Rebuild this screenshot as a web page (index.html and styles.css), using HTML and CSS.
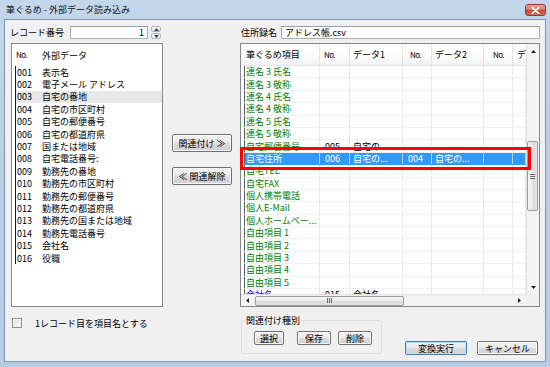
FILE: index.html
```html
<!DOCTYPE html>
<html lang="ja">
<head>
<meta charset="utf-8">
<title>筆ぐるめ - 外部データ読み込み</title>
<link rel="stylesheet" href="styles.css">
</head>
<body>
<div class="window">
  <div class="titlebar">
    <span class="title">筆ぐるめ - 外部データ読み込み</span>
    <span class="close"><svg width="9" height="7" viewBox="0 0 9 7"><path d="M1.5 0.8 L7.5 6.2 M7.5 0.8 L1.5 6.2" stroke="#fff" stroke-width="1.7" stroke-linecap="round"/></svg></span>
  </div>
  <div class="client">
    <div class="rec-row">
      <span class="lbl rec-lbl">レコード番号</span>
      <span class="textbox num">1</span>
      <span class="spin">
        <span class="sp"><svg width="5" height="3" viewBox="0 0 5 3"><polygon points="0,3 2.5,0 5,3" fill="#3b4a5c"/></svg></span>
        <span class="sp"><svg width="5" height="3" viewBox="0 0 5 3"><polygon points="0,0 5,0 2.5,3" fill="#3b4a5c"/></svg></span>
      </span>
    </div>
    <div class="file-row">
      <span class="lbl file-lbl">住所録名</span>
      <span class="textbox file">アドレス帳.csv</span>
    </div>

    <div class="extlist">
      <div class="lhead"><span class="lno nolabel">No.</span><span>外部データ</span></div>
      <div class="lrow"><span class="lno">001</span><span>表示名</span></div>
      <div class="lrow"><span class="lno">002</span><span>電子メール アドレス</span></div>
      <div class="lrow hover"><span class="lno">003</span><span>自宅の番地</span></div>
      <div class="lrow"><span class="lno">004</span><span>自宅の市区町村</span></div>
      <div class="lrow"><span class="lno">005</span><span>自宅の郵便番号</span></div>
      <div class="lrow"><span class="lno">006</span><span>自宅の都道府県</span></div>
      <div class="lrow"><span class="lno">007</span><span>国または地域</span></div>
      <div class="lrow"><span class="lno">008</span><span>自宅電話番号:</span></div>
      <div class="lrow"><span class="lno">009</span><span>勤務先の番地</span></div>
      <div class="lrow"><span class="lno">010</span><span>勤務先の市区町村</span></div>
      <div class="lrow"><span class="lno">011</span><span>勤務先の郵便番号</span></div>
      <div class="lrow"><span class="lno">012</span><span>勤務先の都道府県</span></div>
      <div class="lrow"><span class="lno">013</span><span>勤務先の国または地域</span></div>
      <div class="lrow"><span class="lno">014</span><span>勤務先電話番号</span></div>
      <div class="lrow"><span class="lno">015</span><span>会社名</span></div>
      <div class="lrow"><span class="lno">016</span><span>役職</span></div>
    </div>

    <div class="midbtns">
      <button class="btn">関連付け ≫</button>
      <button class="btn">≪ 関連解除</button>
    </div>

    <div class="gridbox">
      <div class="gdata">
        <div class="ghead">
          <span class="h1">筆ぐるめ項目</span>
          <span class="h2 nolabel">No.</span>
          <span class="h3">データ1</span>
          <span class="h4 nolabel">No.</span>
          <span class="h5">データ2</span>
          <span class="h6 nolabel">No.</span>
          <span class="h7">デ</span>
        </div>
        <div class="grow g"><span>連名 3 氏名</span><span></span><span></span><span></span><span></span><span></span><span></span></div>
        <div class="grow g"><span>連名 3 敬称</span><span></span><span></span><span></span><span></span><span></span><span></span></div>
        <div class="grow g"><span>連名 4 氏名</span><span></span><span></span><span></span><span></span><span></span><span></span></div>
        <div class="grow g"><span>連名 4 敬称</span><span></span><span></span><span></span><span></span><span></span><span></span></div>
        <div class="grow g"><span>連名 5 氏名</span><span></span><span></span><span></span><span></span><span></span><span></span></div>
        <div class="grow g"><span>連名 5 敬称</span><span></span><span></span><span></span><span></span><span></span><span></span></div>
        <div class="grow g"><span>自宅郵便番号</span><span>005</span><span>自宅の...</span><span></span><span></span><span></span><span></span></div>
        <div class="grow sel"><span>自宅住所</span><span>006</span><span>自宅の...</span><span>004</span><span>自宅の...</span><span></span><span></span></div>
        <div class="grow g"><span>自宅TEL</span><span></span><span></span><span></span><span></span><span></span><span></span></div>
        <div class="grow g"><span>自宅FAX</span><span></span><span></span><span></span><span></span><span></span><span></span></div>
        <div class="grow g"><span>個人携帯電話</span><span></span><span></span><span></span><span></span><span></span><span></span></div>
        <div class="grow g"><span>個人E-Mail</span><span></span><span></span><span></span><span></span><span></span><span></span></div>
        <div class="grow g"><span>個人ホームペー...</span><span></span><span></span><span></span><span></span><span></span><span></span></div>
        <div class="grow g"><span>自由項目 1</span><span></span><span></span><span></span><span></span><span></span><span></span></div>
        <div class="grow g"><span>自由項目 2</span><span></span><span></span><span></span><span></span><span></span><span></span></div>
        <div class="grow g"><span>自由項目 3</span><span></span><span></span><span></span><span></span><span></span><span></span></div>
        <div class="grow g"><span>自由項目 4</span><span></span><span></span><span></span><span></span><span></span><span></span></div>
        <div class="grow g"><span>自由項目 5</span><span></span><span></span><span></span><span></span><span></span><span></span></div>
        <div class="grow b"><span>会社名</span><span>015</span><span>会社名</span><span></span><span></span><span></span><span></span></div>
      </div>
      <div class="vscroll">
        <span class="varrow"><svg width="5" height="3" viewBox="0 0 5 3"><polygon points="0,3 2.5,0 5,3" fill="#222"/></svg></span>
        <div class="vtrack">
          <div class="vthumb"><svg width="5" height="5" viewBox="0 0 5 5"><path d="M0 0.5 H5 M0 2.5 H5 M0 4.5 H5" stroke="#6a6a6a" stroke-width="1"/></svg></div>
        </div>
        <span class="varrow"><svg width="5" height="3" viewBox="0 0 5 3"><polygon points="0,0 5,0 2.5,3" fill="#222"/></svg></span>
      </div>
      <div class="hscroll">
        <span class="harrow"><svg width="3" height="5" viewBox="0 0 3 5"><polygon points="3,0 3,5 0,2.5" fill="#222"/></svg></span>
        <div class="hthumb"><svg width="5" height="5" viewBox="0 0 5 5"><path d="M0.5 0 V5 M2.5 0 V5 M4.5 0 V5" stroke="#6a6a6a" stroke-width="1"/></svg></div>
        <span class="hspace"></span>
        <span class="harrow right"><svg width="3" height="5" viewBox="0 0 3 5"><polygon points="0,0 0,5 3,2.5" fill="#222"/></svg></span>
      </div>
      <div class="corner"></div>
      <div class="redbox"></div>
    </div>

    <div class="chkrow">
      <span class="checkbox"></span>
      <span class="chklbl">1レコード目を項目名とする</span>
    </div>

    <div class="actions">
      <fieldset class="group">
        <legend>関連付け種別</legend>
        <div class="gbtns">
          <button class="btn sm b1">選択</button>
          <button class="btn sm b2">保存</button>
          <button class="btn sm b3">削除</button>
        </div>
      </fieldset>
      <button class="btn big default">変換実行</button>
      <button class="btn big cancel">キャンセル</button>
    </div>
  </div>
</div>
</body>
</html>
```

FILE: styles.css
```css
* { box-sizing: border-box; }
html, body { margin: 0; padding: 0; }
body {
  width: 550px;
  height: 367px;
  overflow: hidden;
  font-family: "Noto Sans CJK JP", "Noto Sans", sans-serif;
  font-size: 9px;
  line-height: 1;
  color: #000;
}
.window {
  width: 550px;
  height: 367px;
  display: flex;
  flex-direction: column;
  background: linear-gradient(180deg, #c3d6ec 0%, #bcd1e8 30%, #b6cce5 100%);
}
.titlebar {
  height: 19px;
  display: flex;
  align-items: center;
  padding: 0 4px 0 6px;
}
.title { flex: 1; color: #111; font-size: 9px; }
.close {
  width: 21px;
  height: 12px;
  margin-top: 1px;
  border: 1px solid #8c3b30;
  border-radius: 3px;
  background: linear-gradient(180deg, #e9a99c 0%, #d9786a 45%, #c54a36 55%, #d2705e 100%);
  display: flex;
  align-items: center;
  justify-content: center;
}
.client {
  flex: 1;
  margin: 0 4px 5px 4px;
  border: 1px solid #7f93ad;
  background: #f0f0f0;
  display: grid;
  grid-template-columns: 152px 9px 60px 8px 300px;
  grid-template-rows: 13px 4px 264px 1fr;
  padding: 6px 5px 0 6px;
}
.lbl { line-height: 13px; white-space: nowrap; }
.rec-row { grid-column: 1 / 4; grid-row: 1; display: flex; align-items: center; }
.rec-lbl { width: 60px; margin-left: -1px; }
.textbox {
  height: 13px;
  background: #fff;
  border: 1px solid #abadb3;
  border-top-color: #9a9ea8;
  display: flex;
  align-items: center;
  white-space: nowrap;
}
.num { width: 78px; justify-content: flex-end; padding-right: 3px; }
.spin { width: 10px; height: 13px; margin-left: 3px; display: flex; flex-direction: column; gap: 1px; }
.sp {
  flex: 1;
  border: 1px solid #a9b6c6;
  border-radius: 2px;
  background: linear-gradient(180deg, #f5f8fb, #dde5ee);
  display: flex;
  align-items: center;
  justify-content: center;
}
.file-row { grid-column: 5; grid-row: 1; display: flex; align-items: center; }
.file-lbl { width: 40px; margin-left: 1px; }
.file { flex: 1; padding-left: 3px; }

/* left list */
.extlist {
  grid-column: 1;
  grid-row: 3;
  background: #fff;
  border: 1px solid #828790;
  overflow: hidden;
}
.lhead { height: 22px; display: flex; align-items: center; padding-left: 4px; }
.lhead .lno { width: 26px; }
.nolabel { font-size: 8px; letter-spacing: -0.6px; }
.lrow {
  height: 12.4px;
  margin-left: 3px;
  border-left: 1px solid #1a1a1a;
  display: flex;
  align-items: center;
  padding-left: 1px;
  white-space: nowrap;
}
.lrow .lno { width: 25px; }
.lrow.hover { background: #e8e8e8; }

/* middle */
.midbtns {
  grid-column: 3;
  grid-row: 3;
  display: flex;
  flex-direction: column;
  padding-top: 91px;
  gap: 15px;
}
.btn {
  font-family: inherit;
  font-size: 9px;
  line-height: 1;
  color: #000;
  height: 18px;
  padding: 0;
  border: 1px solid #707070;
  border-radius: 2px;
  background: linear-gradient(180deg, #f2f2f2 0%, #ebebeb 45%, #dddddd 50%, #cfcfcf 100%);
  box-shadow: inset 0 0 0 1px #fafafa;
  display: flex;
  align-items: center;
  justify-content: center;
  white-space: nowrap;
}

/* right grid */
.gridbox {
  grid-column: 5;
  grid-row: 3;
  position: relative;
  background: #fff;
  border: 1px solid #828790;
  display: grid;
  grid-template-columns: 285px 13px;
  grid-template-rows: 250px 12px;
}
.gdata { overflow: hidden; }
.ghead {
  height: 22px;
  display: grid;
  grid-template-columns: 79px 30px 53px 29px 52px 29px 13px;
  border-bottom: 1px solid #e6e6e6;
  background: linear-gradient(180deg, #ffffff 0%, #fbfbfb 60%, #f3f3f3 100%);
}
.ghead span {
  display: flex;
  align-items: center;
  border-right: 1px dotted #cfcfcf;
  white-space: nowrap;
  overflow: hidden;
}
.ghead .h1 { padding-left: 5px; }
.ghead .h2 { padding-left: 4px; }
.ghead .h3 { padding-left: 3px; }
.ghead .h4 { padding-left: 7px; }
.ghead .h5 { padding-left: 3px; }
.ghead .h6 { padding-left: 9px; }
.ghead .h7 { padding-left: 4px; border-right: 0; }
.grow {
  height: 12.4px;
  margin-left: 3px;
  display: grid;
  grid-template-columns: 76px 30px 53px 29px 52px 29px 13px;
  border-bottom: 1px dotted #e2e2e2;
}
.grow span {
  display: flex;
  align-items: center;
  border-right: 1px dotted #d8d8d8;
  white-space: nowrap;
  overflow: hidden;
  padding-left: 3px;
}
.grow span:first-child { border-left: 1px solid #5a5a5a; padding-left: 1px; }
.grow span:nth-child(2), .grow span:nth-child(4), .grow span:nth-child(6) { padding-left: 5px; }
.grow.g span:first-child { color: #008000; }
.grow.b span:first-child { color: #0000ff; }
.grow.sel { background: #3399ff; border-bottom-color: #3399ff; }
.grow.sel span { color: #fff; border-right: 1px solid #a9d2fb; }

.vscroll {
  grid-column: 2;
  grid-row: 1;
  display: flex;
  flex-direction: column;
  background: #f3f3f3;
  border-left: 1px solid #e2e2e2;
}
.varrow { height: 14px; display: flex; align-items: center; justify-content: center; }
.vtrack { flex: 1; }
.vthumb {
  margin: 83px 1px 0 0;
  height: 70px;
  border: 1px solid #9c9c9c;
  border-radius: 2px;
  background: linear-gradient(90deg, #f6f6f6 0%, #e9e9e9 50%, #dadada 51%, #e4e4e4 100%);
  display: flex;
  align-items: center;
  justify-content: center;
}
.hscroll {
  grid-column: 1;
  grid-row: 2;
  display: flex;
  align-items: center;
  background: #f3f3f3;
  border-top: 1px solid #e2e2e2;
}
.harrow { width: 12px; height: 11px; display: flex; align-items: center; justify-content: center; }
.harrow.right { width: 14px; }
.hthumb {
  margin-left: 2px;
  width: 149px;
  height: 10px;
  border: 1px solid #9c9c9c;
  border-radius: 2px;
  background: linear-gradient(180deg, #f6f6f6 0%, #e9e9e9 50%, #dadada 51%, #e4e4e4 100%);
  display: flex;
  align-items: center;
  justify-content: center;
}
.hspace { flex: 1; }
.corner { grid-column: 2; grid-row: 2; background: #f0f0f0; }
.redbox {
  position: absolute;
  left: -1px;
  top: 103px;
  width: 291px;
  height: 23px;
  border: 3px solid #ff0000;
}

/* bottom */
.chkrow {
  grid-column: 1 / 4;
  grid-row: 4;
  align-self: start;
  display: flex;
  align-items: center;
  margin-top: 11px;
  height: 10px;
}
.checkbox {
  width: 10px;
  height: 10px;
  margin-left: 1px;
  border: 1px solid #8f8f8f;
  background: linear-gradient(135deg, #dcdcdc 0%, #f0f0f0 60%, #fbfbfb 100%);
  box-shadow: inset 0 0 0 1px #f4f4f4;
}
.chklbl { margin-left: 13px; white-space: nowrap; }
.actions {
  grid-column: 5;
  grid-row: 4;
  display: flex;
  align-items: flex-start;
}
.group {
  margin: 8px 0 0 1px;
  padding: 0;
  width: 141px;
  height: 39px;
  border: 1px solid #d5dfe5;
  border-radius: 3px;
  min-width: 0;
}
.group legend {
  margin-left: 3px;
  padding: 0 1px;
  line-height: 11px;
  white-space: nowrap;
}
.gbtns { display: flex; margin-top: 5px; }
.btn.sm { height: 14px; }
.b1 { width: 30px; margin-left: 12px; }
.b2 { width: 34px; margin-left: 13px; }
.b3 { width: 34px; margin-left: 7px; }
.btn.big { height: 14px; margin-top: 34px; }
.default {
  width: 62px;
  margin-left: 23px;
  border-color: #3c7fb1;
  box-shadow: inset 0 0 0 1px #b9e0f7;
}
.cancel { width: 61px; margin-left: 10px; }
```
